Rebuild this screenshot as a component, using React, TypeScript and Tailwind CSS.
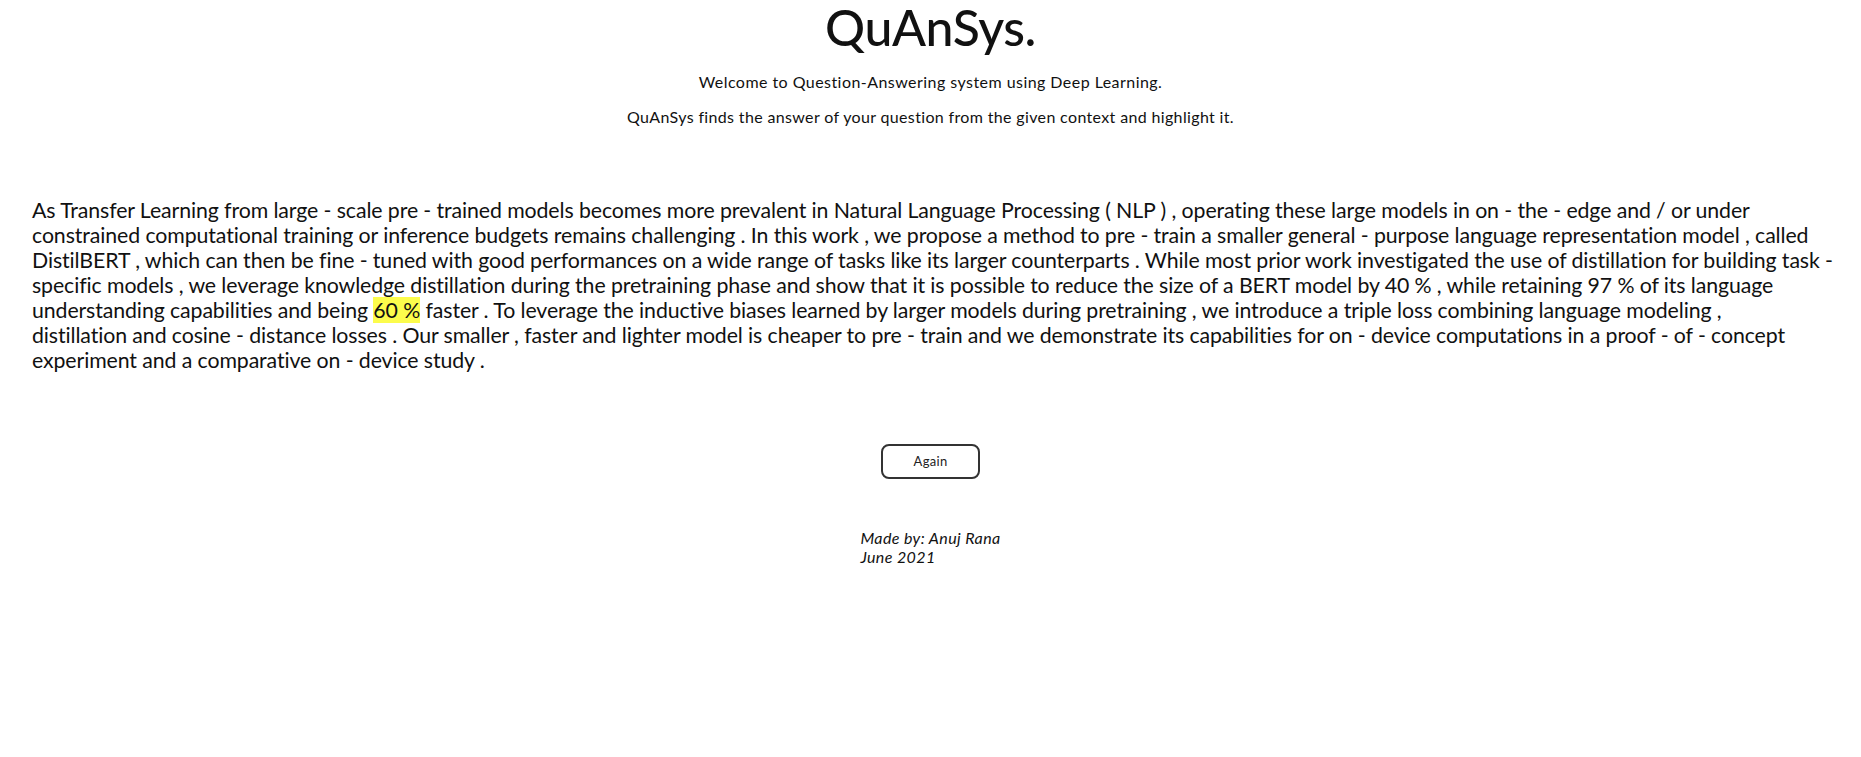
import React from 'react';

// the context, kept in the same lines as the original page wraps it
const linesBefore = [
  'As Transfer Learning from large - scale pre - trained models becomes more prevalent in Natural Language Processing ( NLP ) , operating these large models in on - the - edge and / or under',
  'constrained computational training or inference budgets remains challenging . In this work , we propose a method to pre - train a smaller general - purpose language representation model , called',
  'DistilBERT , which can then be fine - tuned with good performances on a wide range of tasks like its larger counterparts . While most prior work investigated the use of distillation for building task -',
  'specific models , we leverage knowledge distillation during the pretraining phase and show that it is possible to reduce the size of a BERT model by 40 % , while retaining 97 % of its language',
];
const answerLine = {
  before: 'understanding capabilities and being ',
  answer: '60 %',
  after:
    ' faster . To leverage the inductive biases learned by larger models during pretraining , we introduce a triple loss combining language modeling ,',
};
const linesAfter = [
  'distillation and cosine - distance losses . Our smaller , faster and lighter model is cheaper to pre - train and we demonstrate its capabilities for on - device computations in a proof - of - concept',
  'experiment and a comparative on - device study .',
];

const App: React.FC = () => {
  return (
    <div className="min-h-screen bg-white text-[#111] font-['Lato','Noto_Sans',sans-serif]">
      {/* header */}
      <div className="text-center">
        <h1 className="text-[50px] leading-[54px] font-medium tracking-[-0.4px]">QuAnSys.</h1>
        <p className="mt-[18px] text-[16px] leading-[20px] tracking-[0.45px]">
          Welcome to Question-Answering system using Deep Learning.
        </p>
        <p className="mt-[15px] text-[16px] leading-[20px] tracking-[0.35px]">
          QuAnSys finds the answer of your question from the given context and highlight it.
        </p>
      </div>

      {/* context with highlighted answer */}
      <div className="px-[32px] pt-[71px] text-[21.3px] leading-[25px] tracking-[-0.1px]">
        {linesBefore.map((l, i) => (
          <span key={i} className="block whitespace-nowrap">
            {l}
          </span>
        ))}
        <span className="block whitespace-nowrap">
          {answerLine.before}
          <span className="bg-[#fcfc4c]">{answerLine.answer}</span>
          {answerLine.after}
        </span>
        {linesAfter.map((l, i) => (
          <span key={i} className="block whitespace-nowrap">
            {l}
          </span>
        ))}
      </div>

      <div className="mt-[71px] flex justify-center">
        <button className="w-[99px] h-[35px] rounded-[8px] border-2 border-[#333] text-[13px] tracking-[0.3px] text-[#222] bg-white">
          Again
        </button>
      </div>

      <div className="mt-[49px] flex justify-center">
        <div className="text-left italic text-[16px] leading-[19px] tracking-[0.4px]">
          <div>Made by: Anuj Rana</div>
          <div>June 2021</div>
        </div>
      </div>
    </div>
  );
};

export default App;
